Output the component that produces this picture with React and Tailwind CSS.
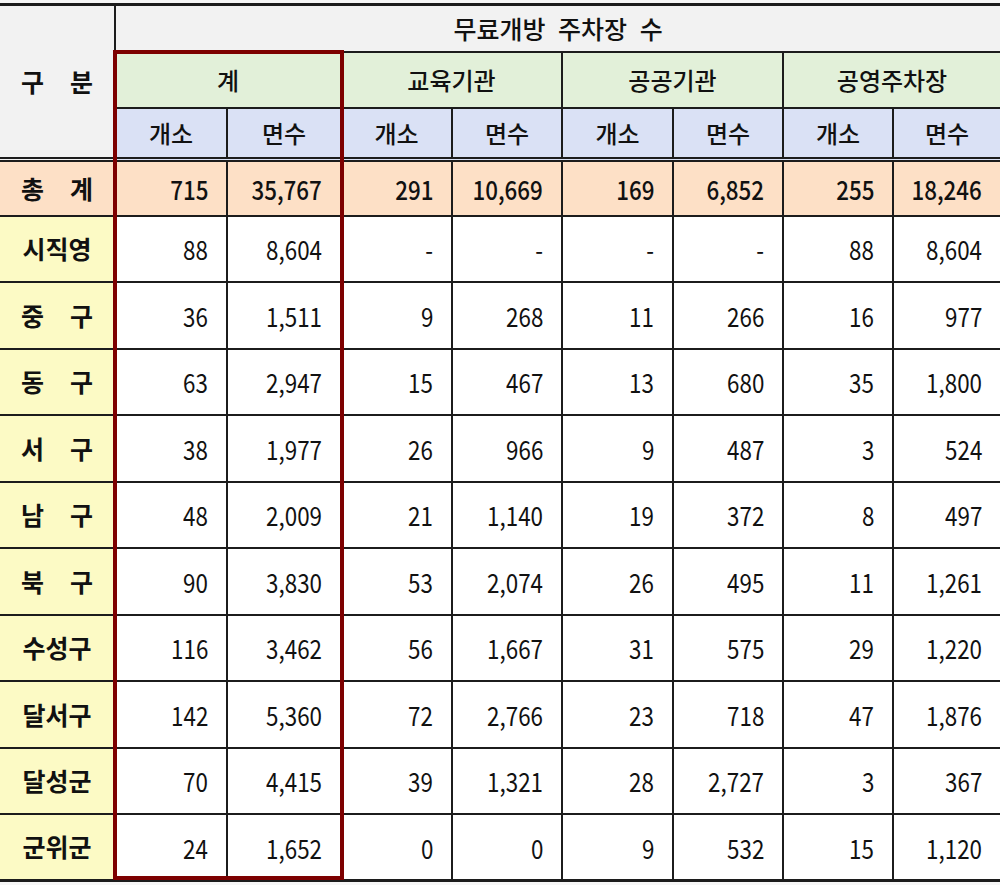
import React from "react";

const groups = ["계", "교육기관", "공공기관", "공영주차장"];

const total = ["715", "35,767", "291", "10,669", "169", "6,852", "255", "18,246"];

const rows = [
  { name: ["시직영"], values: ["88", "8,604", "-", "-", "-", "-", "88", "8,604"] },
  { name: ["중", "구"], values: ["36", "1,511", "9", "268", "11", "266", "16", "977"] },
  { name: ["동", "구"], values: ["63", "2,947", "15", "467", "13", "680", "35", "1,800"] },
  { name: ["서", "구"], values: ["38", "1,977", "26", "966", "9", "487", "3", "524"] },
  { name: ["남", "구"], values: ["48", "2,009", "21", "1,140", "19", "372", "8", "497"] },
  { name: ["북", "구"], values: ["90", "3,830", "53", "2,074", "26", "495", "11", "1,261"] },
  { name: ["수성구"], values: ["116", "3,462", "56", "1,667", "31", "575", "29", "1,220"] },
  { name: ["달서구"], values: ["142", "5,360", "72", "2,766", "23", "718", "47", "1,876"] },
  { name: ["달성군"], values: ["70", "4,415", "39", "1,321", "28", "2,727", "3", "367"] },
  { name: ["군위군"], values: ["24", "1,652", "0", "0", "9", "532", "15", "1,120"] },
];

const colWidths = [115, 112, 114, 111, 110, 111, 110, 110, 107];

// spaced label such as "중   구"
function Label({ parts }) {
  return (
    <div className="flex justify-center gap-[26px]">
      {parts.map((p, i) => (
        <span key={i}>{p}</span>
      ))}
    </div>
  );
}

// the sheet uses a narrow figure font, squeeze the numbers a bit
function Num({ children }) {
  return <span className="inline-block origin-right scale-x-[0.86]">{children}</span>;
}

export default function App() {
  const line = "border-[#1c1c1c]";

  return (
    <div className="relative w-[1000px] h-[885px] bg-[#f6f6f6] pt-[3px] font-['Noto_Sans_CJK_KR','Noto_Sans',sans-serif] text-[#111]">
      <table className="w-[1000px] table-fixed border-collapse bg-white">
        <colgroup>
          {colWidths.map((w, i) => (
            <col key={i} style={{ width: w }} />
          ))}
        </colgroup>
        <thead>
          <tr className="h-[47px]">
            <th
              rowSpan={3}
              className={`border-t-[3px] border-r-2 ${line} bg-[#f2f2f2] text-[25px] font-bold`}
            >
              <Label parts={["구", "분"]} />
            </th>
            <th
              colSpan={8}
              className={`border-t-[3px] border-b-2 ${line} bg-[#f2f2f2] text-[25px] font-medium [word-spacing:7px]`}
            >
              무료개방 주차장 수
            </th>
          </tr>
          <tr className="h-[56px]">
            {groups.map((g, i) => (
              <th
                key={g}
                colSpan={2}
                className={`border-b-2 ${i < 3 ? "border-r-2" : ""} ${line} bg-[#e2f0d9] text-[24px] font-medium`}
              >
                {g}
              </th>
            ))}
          </tr>
          <tr className="h-[52px]">
            {groups.map((g, i) => (
              <React.Fragment key={g}>
                <th className={`border-r-2 ${line} bg-[#dae1f5] text-[24px] font-medium`}>개소</th>
                <th className={`${i < 3 ? "border-r-2" : ""} ${line} bg-[#dae1f5] text-[24px] font-medium`}>면수</th>
              </React.Fragment>
            ))}
          </tr>
        </thead>
        <tbody>
          <tr className="h-[56px]">
            <td className={`border-t-[5px] border-double border-r-2 ${line} bg-[#fde0c6] text-[25px] font-bold`}>
              <Label parts={["총", "계"]} />
            </td>
            {total.map((v, i) => (
              <td
                key={i}
                className={`border-t-[5px] border-double ${i < 7 ? "border-r-2" : ""} ${line} bg-[#fde0c6] text-right pr-[18px] text-[26px] font-medium`}
              >
                <Num>{v}</Num>
              </td>
            ))}
          </tr>
          {rows.map((r, ri) => {
            const last = ri === rows.length - 1;
            const rowBorder = last ? "border-b-[3px]" : "";
            return (
              <tr key={ri} className="h-[66.5px]">
                <td className={`border-t-2 border-r-2 ${rowBorder} ${line} bg-[#fcfac5] text-[25px] font-bold`}>
                  <Label parts={r.name} />
                </td>
                {r.values.map((v, i) => (
                  <td
                    key={i}
                    className={`border-t-2 ${i < 7 ? "border-r-2" : ""} ${rowBorder} ${line} text-right pr-[18px] text-[26px] font-normal`}
                  >
                    <Num>{v}</Num>
                  </td>
                ))}
              </tr>
            );
          })}
        </tbody>
      </table>

      {/* red highlight around the 계 columns */}
      <div className="pointer-events-none absolute left-[113px] top-[50px] w-[231px] h-[830px] border-4 border-[#7d0000]" />
    </div>
  );
}
